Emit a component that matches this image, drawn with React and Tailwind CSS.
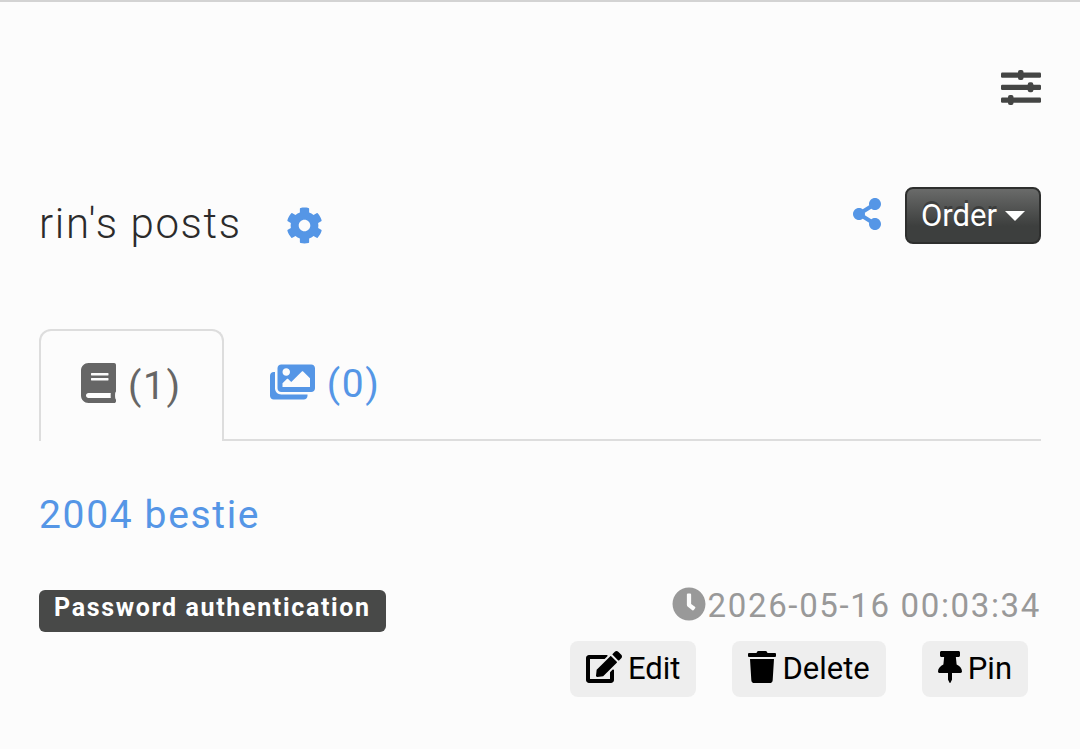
import React, { useState } from "react";
import {
  FaBook,
  FaClock,
  FaCog,
  FaEdit,
  FaImages,
  FaShareAlt,
  FaThumbtack,
  FaTrash,
} from "react-icons/fa";

function SlidersIcon() {
  return (
    <svg width="40" height="36" viewBox="0 0 40 36" fill="#444544">
      <rect x="0" y="2.5" width="40" height="5.2" rx="1.2" />
      <rect x="17" y="0" width="5.5" height="10" rx="2" />
      <rect x="0" y="14.8" width="40" height="5.2" rx="1.2" />
      <rect x="26.8" y="12.3" width="5.5" height="10" rx="2" />
      <rect x="0" y="27.5" width="40" height="5.2" rx="1.2" />
      <rect x="7" y="25" width="5.5" height="10" rx="2" />
    </svg>
  );
}

function ActionButton({ icon, label }) {
  return (
    <button className="flex h-14 items-center gap-1.5 rounded-lg bg-[#eeeeee] px-4 text-[31px] leading-10 tracking-normal text-black">
      {icon}
      {label}
    </button>
  );
}

export default function App() {
  const [tab, setTab] = useState("posts");

  const tabClass = (name) =>
    tab === name
      ? "-mb-[2px] flex h-28 items-center gap-3 rounded-t-xl border-2 border-b-0 border-[#dddddd] bg-[#fcfcfc] px-10 text-[#666666]"
      : "flex h-[110px] items-center gap-3 px-[46px] text-[#5596e6]";

  return (
    <div className="min-h-screen border-t-2 border-[#d3d3d3] bg-[#fcfcfc] px-[39px] pb-12 font-['Roboto',sans-serif] text-[33px] tracking-wider text-[#2b2b2b]">
      <div className="flex justify-end pt-[68px]">
        <button aria-label="Settings">
          <SlidersIcon />
        </button>
      </div>

      <header className="mt-[81px] flex items-start justify-between">
        <div className="flex items-center gap-11">
          <h1 className="pt-[11px] text-[42px] leading-[52px] font-light">rin's posts</h1>
          <a href="#settings" aria-label="Post settings" className="pt-3.5 text-[#5596e6]">
            <FaCog size={37} />
          </a>
        </div>
        <div className="flex items-center gap-6">
          <a href="#share" aria-label="Share" className="mb-1 text-[#5596e6]">
            <FaShareAlt className="h-8 w-7" />
          </a>
          <button className="flex h-[57px] items-center gap-2 rounded-lg border-2 border-[#2e2f2e] bg-linear-to-b from-[#6a6b6a] to-[#3d3f3e] to-70% px-3.5 text-[31px] leading-10 tracking-normal text-white text-shadow-[0_-3px_0_rgb(0_0_0/0.3)]">
            Order
            <svg width="20" height="10" viewBox="0 0 20 10" fill="currentColor">
              <path d="M0 0h20L10 10z" />
            </svg>
          </button>
        </div>
      </header>

      <nav className="mt-[79px] flex border-b-2 border-[#dddddd] text-[39px] leading-[56px]">
        <button className={tabClass("posts")} onClick={() => setTab("posts")}>
          <FaBook className="mb-1.5 h-10 w-[35px]" />
          (1)
        </button>
        <button className={tabClass("images")} onClick={() => setTab("images")}>
          <FaImages className="mb-1 h-10 w-[45px]" />
          (0)
        </button>
      </nav>

      <article className="pt-12">
        <h2 className="text-[39px] leading-[52px]">
          <a href="#post" className="text-[#5596e6]">
            2004 bestie
          </a>
        </h2>
        <div className="mt-[45px] flex items-start justify-between">
          <span className="mt-1 h-[42px] rounded-md bg-[#484948] px-[15px] text-[25px] leading-9 font-bold text-white">
            Password authentication
          </span>
          <time className="flex items-center gap-0.5 text-[33px] leading-10 text-[#999999]">
            <FaClock size={34} className="mb-1" />
            2026-05-16 00:03:34
          </time>
        </div>
        <div className="mt-[9px] mr-[13px] flex justify-end gap-9">
          <ActionButton icon={<FaEdit className="mb-1 h-8 w-9" />} label="Edit" />
          <ActionButton icon={<FaTrash className="mb-1 h-8 w-7" />} label="Delete" />
          <ActionButton icon={<FaThumbtack className="mb-1 h-8 w-6" />} label="Pin" />
        </div>
      </article>
    </div>
  );
}
